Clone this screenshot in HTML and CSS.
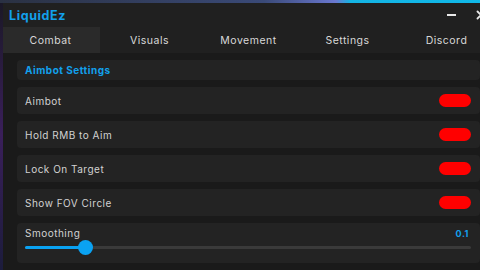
FILE: index.html
```html
<!DOCTYPE html>
<html lang="en">
<head>
    <meta charset="UTF-8">
    <meta name="viewport" content="width=device-width, initial-scale=1.0">
    <title>LiquidEz</title>
    <link rel="stylesheet" href="styles.css">
</head>
<body>

<div class="window">
    <div class="titlebar">
        <span class="logo">LiquidEz</span>
        <span class="minimize"></span>
        <svg class="close" width="10" height="10" viewBox="0 0 10 10">
            <path d="M1.5 1.5 L8.5 8.5 M8.5 1.5 L1.5 8.5" stroke="#e8e8e8" stroke-width="1.8" stroke-linecap="round"/>
        </svg>
    </div>

    <div class="tabs">
        <div class="tab active">Combat</div>
        <div class="tab">Visuals</div>
        <div class="tab">Movement</div>
        <div class="tab">Settings</div>
        <div class="tab">Discord</div>
    </div>

    <div class="content">
        <div class="card header">Aimbot Settings</div>

        <div class="card row">
            <span>Aimbot</span>
            <span class="toggle"></span>
        </div>
        <div class="card row">
            <span>Hold RMB to Aim</span>
            <span class="toggle"></span>
        </div>
        <div class="card row">
            <span>Lock On Target</span>
            <span class="toggle"></span>
        </div>
        <div class="card row">
            <span>Show FOV Circle</span>
            <span class="toggle"></span>
        </div>

        <div class="card slider-card">
            <div class="slider-top">
                <span>Smoothing</span>
                <span class="value">0.1</span>
            </div>
            <div class="track">
                <div class="fill" style="width: 60px"></div>
                <div class="knob" style="left: 60px"></div>
            </div>
        </div>
    </div>
</div>

</body>
</html>
```

FILE: styles.css
```css
body {
    margin: 0;
    overflow: hidden;
    font-family: Inter, "Noto Sans", sans-serif;
    background: linear-gradient(90deg, #2a3142 0%, #3a4a78 55%, #6a78d0 70%, #14b4e4 73%, #10b8e8 100%) top / 100% 3px no-repeat,
                linear-gradient(180deg, #1a1826 0%, #3a1f5a 50%, #1c1c3c 100%);
    height: 270px;
}

.window {
    margin: 3px 0 0 3px;
    width: 491px;
    height: 280px;
    background-color: #1a1a1a;
    overflow: hidden;
}

.titlebar {
    height: 24px;
    background-color: #202020;
    display: flex;
    align-items: center;
    padding-left: 6px;
}

.logo {
    color: #12a0ec;
    font-weight: 700;
    font-size: 12.5px;
    letter-spacing: 0.6px;
    flex: 1;
}

.minimize {
    width: 9px;
    height: 2px;
    background-color: #e8e8e8;
    margin-right: 20px;
}

.close {
    margin-right: 8px;
}

.tabs {
    height: 26px;
    background-color: #202020;
    display: flex;
    margin-left: -2px;
}

.tab {
    flex: none;
    width: 99px;
    display: flex;
    align-items: center;
    justify-content: center;
    color: #d8d8d8;
    font-size: 10.5px;
    letter-spacing: 0.5px;
}

.tab.active {
    background-color: #2a2a2a;
}

.content {
    padding: 7px 14px;
    display: flex;
    flex-direction: column;
    gap: 7px;
}

.card {
    background-color: #232323;
    border-radius: 4px;
    padding: 0 9px 0 8px;
    color: #d2d2d2;
    font-size: 10px;
    letter-spacing: 0.5px;
}

.header {
    height: 20px;
    line-height: 20px;
    color: #12a0ec;
    font-weight: 700;
}

.row {
    height: 27px;
    display: flex;
    align-items: center;
    justify-content: space-between;
}

.toggle {
    width: 32px;
    height: 13px;
    border-radius: 7px;
    background-color: #ff0000;
}

.slider-card {
    height: 40px;
    padding-top: 3px;
    box-sizing: border-box;
}

.slider-top {
    display: flex;
    justify-content: space-between;
    align-items: center;
    height: 14px;
}

.value {
    color: #12a0ec;
    font-weight: 700;
    font-size: 9px;
    margin-right: 2px;
}

.track {
    position: relative;
    margin-top: 6px;
    height: 3px;
    background-color: #3a3a3a;
    border-radius: 2px;
}

.fill {
    height: 3px;
    background-color: #0aa2f2;
    border-radius: 2px;
}

.knob {
    position: absolute;
    top: -6px;
    width: 15px;
    height: 15px;
    margin-left: -7px;
    border-radius: 50%;
    background-color: #0aa2f2;
}
```
